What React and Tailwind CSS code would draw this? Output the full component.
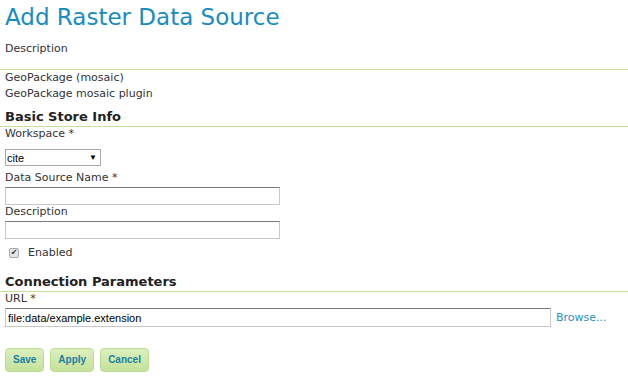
import React from 'react';

const dv = { fontFamily: '"DejaVu Sans", Verdana, sans-serif' };
const ar = { fontFamily: '"Liberation Sans", Arial, sans-serif' };

const Button = ({ label }) => (
  <button
    className="h-[24px] px-[7px] rounded-[4px] border border-[#b9dc8e] bg-gradient-to-b from-[#dcefbd] to-[#c3e29a] text-[10px] font-bold text-[#1b7fa0]"
    style={ar}
  >
    {label}
  </button>
);

const TextInput = ({ width, value }) => (
  <div
    className="h-[18px] border border-[#c8c8c8] border-t-[#7a7a7a] flex items-center px-[2px] text-[11px] text-black"
    style={{ ...ar, width }}
  >
    {value}
  </div>
);

const App = () => {
  return (
    <div className="w-[628px] h-[377px] bg-white text-[#333] text-[11px] leading-[16px]" style={dv}>
      <div className="pl-[5px] pt-[2px]">
        <h1 className="text-[23px] leading-[30px] text-[#1a8cbf]">Add Raster Data Source</h1>
        <div className="mt-[9px]">Description</div>
      </div>

      <div className="mt-[12px] border-t border-[#c6df9c] pl-[5px]">
        <div>GeoPackage (mosaic)</div>
        <div>GeoPackage mosaic plugin</div>
      </div>

      <h2 className="mt-[7px] pl-[5px] pb-[1px] text-[13px] leading-[16px] font-bold text-[#222] border-b border-[#c6df9c]">
        Basic Store Info
      </h2>
      <div className="pl-[5px] leading-[14px]">
        <div>Workspace *</div>
        <div
          className="mt-[8px] w-[96px] h-[17px] border border-[#a8a8a8] flex items-center justify-between px-[1px] text-[11px] text-black"
          style={ar}
        >
          <span>cite</span>
          <span className="text-[8px] pr-[2px]">▼</span>
        </div>
        <div className="mt-[5px]">Data Source Name *</div>
        <div className="mt-[2px]">
          <TextInput width="275px" />
        </div>
        <div>Description</div>
        <div className="mt-[2px]">
          <TextInput width="275px" />
        </div>
        <div className="mt-[6px] h-[16px] flex items-center pl-[4px]">
          <span className="w-[10px] h-[10px] border border-[#a8a8a8] bg-[#e6e6e6] rounded-[2px] flex items-center justify-center text-[8px] text-[#333] leading-none">
            ✔
          </span>
          <span className="ml-[9px]">Enabled</span>
        </div>
      </div>

      <h2 className="mt-[13px] pl-[5px] pb-[1px] text-[13px] leading-[16px] font-bold text-[#222] border-b border-[#c6df9c]">
        Connection Parameters
      </h2>
      <div className="pl-[5px] leading-[14px]">
        <div>URL *</div>
        <div className="mt-[2px] flex items-center">
          <div
            className="w-[546px] h-[19px] border border-[#c8c8c8] border-t-[#7a7a7a] flex items-center px-[2px] text-[11px] text-black"
            style={ar}
          >
            file:data/example.extension
          </div>
          <span className="ml-[5px] text-[#2a8fc1]">Browse...</span>
        </div>
        <div className="mt-[21px] flex gap-[6px]">
          <Button label="Save" />
          <Button label="Apply" />
          <Button label="Cancel" />
        </div>
      </div>
    </div>
  );
};

export default App;
